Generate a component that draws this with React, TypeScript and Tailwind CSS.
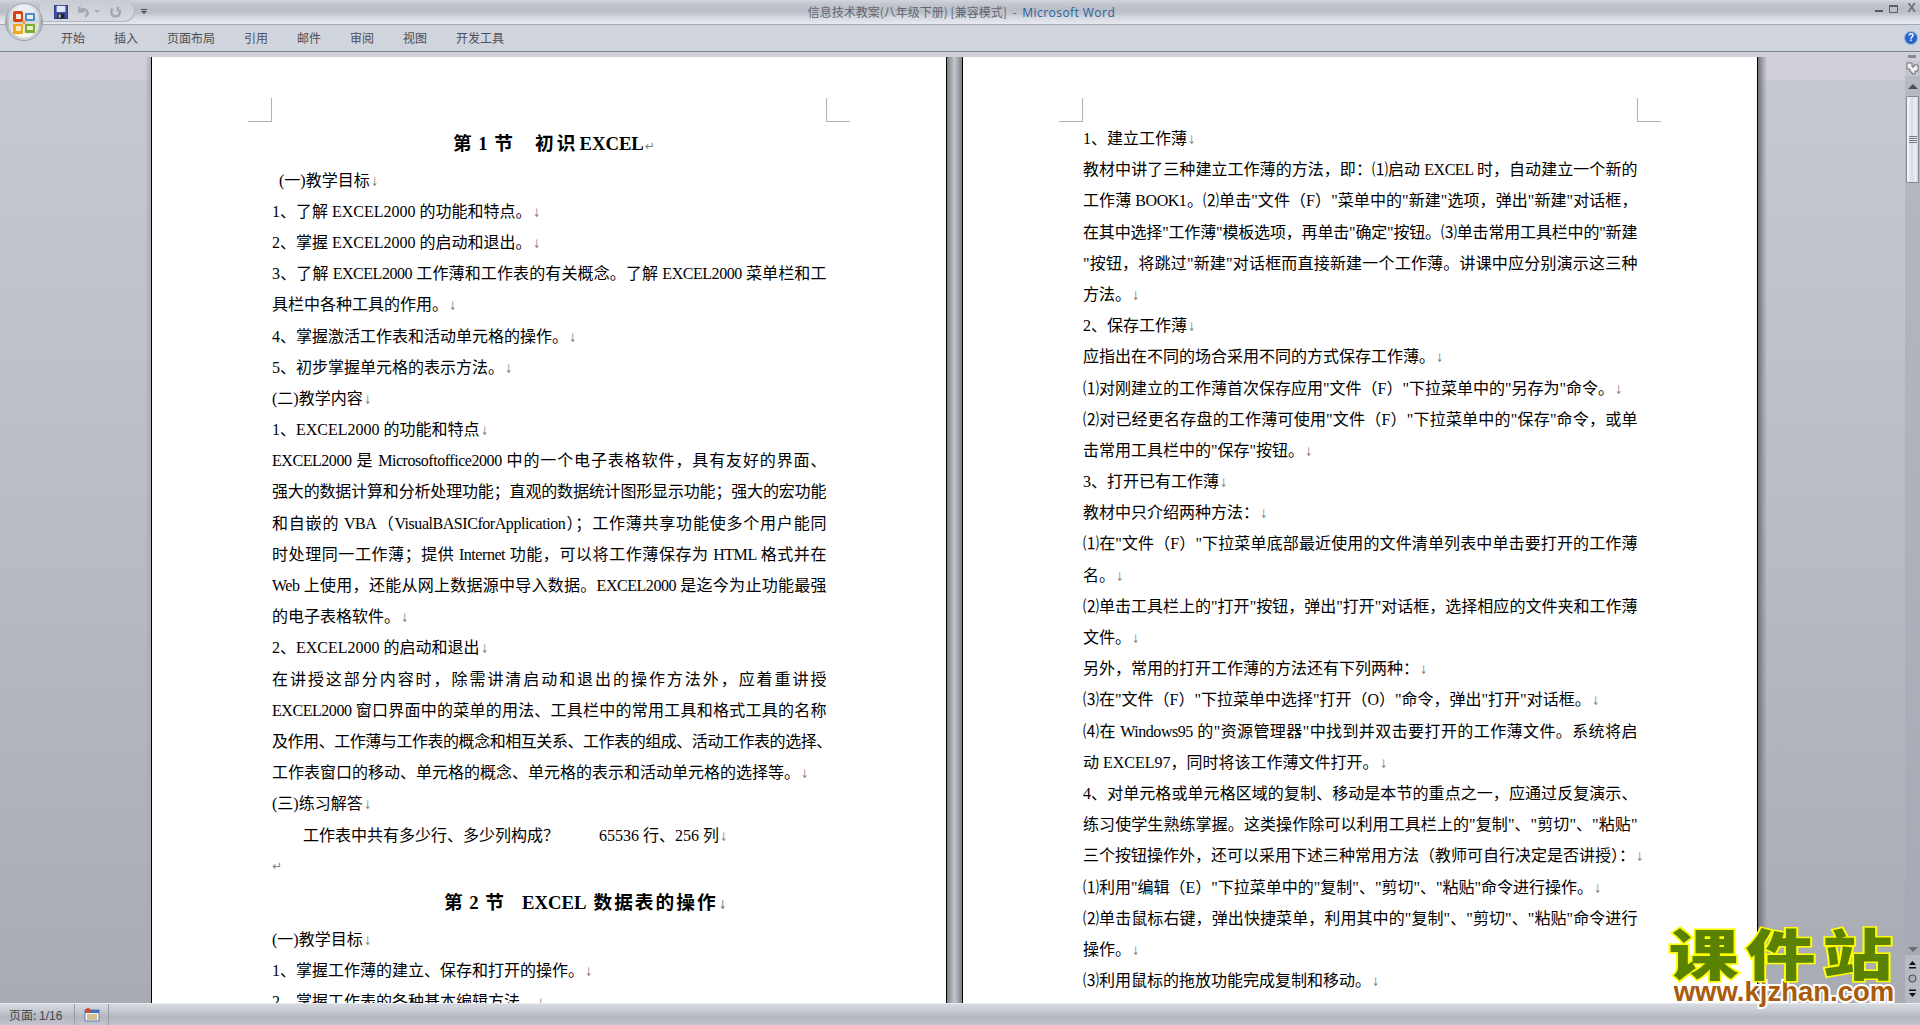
import React from "react";

const fw = (s: string) =>
  s
    .replace(/\(([FEO]|Visual[^)]*|教师[^)]*)\)/g, "\uFF08$1\uFF09")
    .replace(/,/g, "\uFF0C")
    .replace(/:/g, "\uFF1A")
    .replace(/;/g, "\uFF1B")
    .replace(/\?/g, "\uFF1F");

const Br = () => <span className="text-[#808080] text-[12px] font-['DejaVu_Sans'] ml-[1px] inline-block w-[8px] scale-x-[0.7] origin-left">↓</span>;

function L({ t, full, br = true, cls = "" }: { t: string; full?: boolean; br?: boolean; cls?: string }) {
  return (
    <div className={"h-[31.2px] leading-[31.2px] whitespace-nowrap " + (full ? "tracking-[-0.45px] [text-align:justify] [text-align-last:justify] " : "") + cls}>
      {fw(t)}
      {br && !full ? <Br /> : null}
    </div>
  );
}

const left1: [string, boolean?, string?][] = [
  ["(一)教学目标", false, "pl-[7px]"],
  ["1、了解 EXCEL2000 的功能和特点。"],
  ["2、掌握 EXCEL2000 的启动和退出。"],
  ["3、了解 EXCEL2000 工作薄和工作表的有关概念。了解 EXCEL2000 菜单栏和工", true],
  ["具栏中各种工具的作用。"],
  ["4、掌握激活工作表和活动单元格的操作。"],
  ["5、初步掌握单元格的表示方法。"],
  ["(二)教学内容"],
  ["1、EXCEL2000 的功能和特点"],
  ["EXCEL2000 是 Microsoftoffice2000 中的一个电子表格软件,具有友好的界面、", true],
  ["强大的数据计算和分析处理功能;直观的数据统计图形显示功能;强大的宏功能", true],
  ["和自嵌的 VBA(VisualBASICforApplication);工作薄共享功能使多个用户能同", true],
  ["时处理同一工作薄;提供 Internet 功能,可以将工作薄保存为 HTML 格式并在", true],
  ["Web 上使用,还能从网上数据源中导入数据。EXCEL2000 是迄今为止功能最强", true],
  ["的电子表格软件。"],
  ["2、EXCEL2000 的启动和退出"],
  ["在讲授这部分内容时,除需讲清启动和退出的操作方法外,应着重讲授", true],
  ["EXCEL2000 窗口界面中的菜单的用法、工具栏中的常用工具和格式工具的名称", true],
  ["及作用、工作薄与工作表的概念和相互关系、工作表的组成、活动工作表的选择、", true],
  ["工作表窗口的移动、单元格的概念、单元格的表示和活动单元格的选择等。"],
  ["(三)练习解答"],
  ["工作表中共有多少行、多少列构成?\u00a0\u00a0\u00a0\u00a0\u00a0\u00a0\u00a0\u00a0\u00a0\u00a065536 行、256 列", false, "pl-[31px]"],
];

const left2: string[] = [
  "(一)教学目标",
  "1、掌握工作薄的建立、保存和打开的操作。",
  "2、掌握工作表的各种基本编辑方法。",
];

const right: [string, boolean?, string?][] = [
  ["1、建立工作薄"],
  ["教材中讲了三种建立工作薄的方法,即:⑴启动 EXCEL 时,自动建立一个新的", true],
  ["工作薄 BOOK1。⑵单击\"文件(F)\"菜单中的\"新建\"选项,弹出\"新建\"对话框,", true],
  ["在其中选择\"工作薄\"模板选项,再单击\"确定\"按钮。⑶单击常用工具栏中的\"新建", true],
  ["\"按钮,将跳过\"新建\"对话框而直接新建一个工作薄。讲课中应分别演示这三种", true],
  ["方法。"],
  ["2、保存工作薄"],
  ["应指出在不同的场合采用不同的方式保存工作薄。"],
  ["⑴对刚建立的工作薄首次保存应用\"文件(F)\"下拉菜单中的\"另存为\"命令。"],
  ["⑵对已经更名存盘的工作薄可使用\"文件(F)\"下拉菜单中的\"保存\"命令,或单", true],
  ["击常用工具栏中的\"保存\"按钮。"],
  ["3、打开已有工作薄"],
  ["教材中只介绍两种方法:"],
  ["⑴在\"文件(F)\"下拉菜单底部最近使用的文件清单列表中单击要打开的工作薄", true],
  ["名。"],
  ["⑵单击工具栏上的\"打开\"按钮,弹出\"打开\"对话框,选择相应的文件夹和工作薄", true],
  ["文件。"],
  ["另外,常用的打开工作薄的方法还有下列两种:"],
  ["⑶在\"文件(F)\"下拉菜单中选择\"打开(O)\"命令,弹出\"打开\"对话框。"],
  ["⑷在 Windows95 的\"资源管理器\"中找到并双击要打开的工作薄文件。系统将启", true],
  ["动 EXCEL97,同时将该工作薄文件打开。"],
  ["4、对单元格或单元格区域的复制、移动是本节的重点之一,应通过反复演示、", true],
  ["练习使学生熟练掌握。这类操作除可以利用工具栏上的\"复制\"、\"剪切\"、\"粘贴\"", true],
  ["三个按钮操作外,还可以采用下述三种常用方法(教师可自行决定是否讲授):"],
  ["⑴利用\"编辑(E)\"下拉菜单中的\"复制\"、\"剪切\"、\"粘贴\"命令进行操作。"],
  ["⑵单击鼠标右键,弹出快捷菜单,利用其中的\"复制\"、\"剪切\"、\"粘贴\"命令进行", true],
  ["操作。"],
  ["⑶利用鼠标的拖放功能完成复制和移动。"],
];

const tabs = ["开始", "插入", "页面布局", "引用", "邮件", "审阅", "视图", "开发工具"];

function OfficeButton() {
  return (
    <svg width="38" height="38" viewBox="0 0 38 38" className="absolute left-[5px] top-[3px]">
      <defs>
        <linearGradient id="rim" x1="0" y1="0" x2="0" y2="1">
          <stop offset="0" stopColor="#f4f5f7" />
          <stop offset="0.5" stopColor="#a9adb5" />
          <stop offset="1" stopColor="#d9dbe0" />
        </linearGradient>
        <linearGradient id="glass" x1="0" y1="0" x2="0" y2="1">
          <stop offset="0" stopColor="#f0f2f5" />
          <stop offset="0.5" stopColor="#d3d6dc" />
          <stop offset="1" stopColor="#fbfaf0" />
        </linearGradient>
      </defs>
      <circle cx="19" cy="19" r="18.5" fill="url(#rim)" stroke="#8d9098" strokeWidth="0.8" />
      <circle cx="19" cy="19" r="15.5" fill="url(#glass)" />
      <rect x="8" y="8" width="10" height="11" rx="2" fill="#d8420e" />
      <rect x="11" y="11" width="5" height="5" fill="#f8ece0" />
      <rect x="20" y="10" width="10" height="8" rx="1" fill="#4d8ac6" />
      <rect x="22" y="12" width="6" height="4" fill="#e8f0f7" />
      <rect x="8" y="21" width="10" height="10" rx="1" fill="#f3a71a" />
      <rect x="11" y="23" width="5" height="5" fill="#fbe9bf" />
      <rect x="20" y="21" width="10" height="9" rx="1" fill="#7eaa2d" />
      <rect x="22" y="23" width="6" height="4" fill="#e6efd2" />
      <circle cx="19" cy="19.5" r="1.4" fill="#e8912c" />
    </svg>
  );
}

function Save() {
  return (
    <svg width="14" height="14" viewBox="0 0 16 16">
      <rect x="0.5" y="0.5" width="15" height="15" fill="#3c4fa8" stroke="#2a3580" />
      <rect x="3" y="1" width="10" height="7" fill="#dfe4f6" />
      <rect x="4" y="10" width="8" height="5.500" fill="#20242e" />
      <rect x="5.500" y="11" width="2" height="3.500" fill="#d5d8e0" />
    </svg>
  );
}

function Scrollbar() {
  return (
    <div className="w-[15px] flex flex-col bg-[linear-gradient(180deg,#b6b9c2,#a6a9b3)]">
      <div className="h-[9px] bg-[#d0ced8] flex justify-center items-start pt-[3px] -ml-[1px]">
        <div className="w-[8px] h-[3px] bg-[#85888f]" />
      </div>
      <div className="h-[15px] bg-[#c4c7cf] flex items-center justify-center">
        <svg width="13" height="13" viewBox="0 0 13 13">
          <path d="M1 1h5v4h2V3h4v6H9v3H6v-2H4V7H1z" fill="#f2eef2" stroke="#55585f" strokeWidth="0.8" />
        </svg>
      </div>
      <div className="h-[20px] flex items-center justify-center">
        <div className="w-0 h-0 border-x-[5px] border-x-transparent border-b-[5px] border-b-[#4c5059]" />
      </div>
      <div className="h-[87px] mx-[1px] border border-[#888b93] rounded-[1px] bg-[linear-gradient(90deg,#f7f8fa,#d8dbe2_45%,#eef0f4_80%,#c9ccd4)] flex flex-col items-center justify-center gap-[1px]">
        <div className="w-[8px] h-px bg-[#777a82]" />
        <div className="w-[8px] h-px bg-[#777a82]" />
        <div className="w-[8px] h-px bg-[#777a82]" />
        <div className="w-[8px] h-px bg-[#777a82]" />
      </div>
      <div className="flex-1 flex items-end justify-center pb-[3px]">
        <div className="w-0 h-0 border-x-[5px] border-x-transparent border-t-[5px] border-t-[#6c7079]" />
      </div>
      <div className="h-[48px] bg-[#b8bbc4] flex flex-col items-center justify-around py-[2px]">
        <svg width="9" height="9" viewBox="0 0 9 9"><path d="M4.500 1L8 5H1zM1 7h7v1.400H1z" fill="#111" /></svg>
        <svg width="9" height="9" viewBox="0 0 9 9"><circle cx="4.500" cy="4.500" r="3.600" fill="#a9acb3" stroke="#444" /></svg>
        <svg width="9" height="9" viewBox="0 0 9 9"><path d="M1 .6h7V2H1zM1 4h7L4.500 8z" fill="#111" /></svg>
      </div>
    </div>
  );
}

export default function App() {
  return (
    <div className="relative w-[1920px] h-[1025px] overflow-hidden flex flex-col font-['Noto_Sans_CJK_SC','Liberation_Sans',sans-serif]">
      {/* Title bar */}
      <div className="h-[25px] border-b border-[#a5a8b0] grid grid-cols-[1fr_auto_1fr] bg-[linear-gradient(180deg,#d2d5dc_0,#c3c6ce_4px,#babdc6_10px,#c2c5cd_14px,#d5d8df_17px,#e6e9ef_24px)]">
        <div className="flex items-start">
          <div className="ml-[40px] w-[95px] h-[22px] rounded-br-[14px] rounded-tr-[14px] border-r border-b border-[#b3b6be] bg-[linear-gradient(180deg,#c8cbd3,#d6d9e0)] flex items-center pl-[14px] pt-[2px]">
            <Save />
            <svg width="13" height="13" viewBox="0 0 16 16" fill="none" stroke="#a4a7ae" strokeWidth="3" className="ml-[9px]"><path d="M3 2v6h6M4 7c3-3 8-2 9 2 .5 2-1 4-3 5" /></svg>
            <div className="ml-[4px] w-0 h-0 border-x-[3px] border-x-transparent border-t-[3px] border-t-[#a8abb2]" />
            <svg width="13" height="13" viewBox="0 0 16 16" fill="none" stroke="#a4a7ae" strokeWidth="3" className="ml-[9px]"><path d="M11 2v6M4 4C1.500 8 3 14 8 14s6.500-4 5-8" /></svg>
          </div>
          <div className="ml-[6px] mt-[9px] flex flex-col items-center gap-[1px]">
            <div className="w-[6px] h-px bg-[#4a4d55]" />
            <div className="w-0 h-0 border-x-[3px] border-x-transparent border-t-[3px] border-t-[#4a4d55]" />
          </div>
        </div>
        <div className="text-[12px] leading-[24px] whitespace-nowrap text-[#62666f] pl-[3px]">
          信息技术教案(八年级下册) [兼容模式] <span className="mx-[3px]">-</span>{" "}
          <span className="text-[#2b5f9e] font-['Open_Sans'] tracking-[0.45px]">Microsoft Word</span>
        </div>
        <div className="flex items-start justify-end pr-[2px]">
          <div className="mt-[10px] w-[8px] h-[2px] bg-[#55585f] mr-[6px]" />
          <div className="mt-[5px] w-[9px] h-[8px] border border-t-2 border-[#5c6068] mr-[9px]" />
          <div className="mt-[1px] mr-[2px] text-[13px] leading-[14px] font-bold text-[#6e7178] font-['Liberation_Sans']">X</div>
        </div>
      </div>

      {/* Ribbon tabs */}
      <div className="h-[27px] bg-[#d0d4dc] border-b border-[#7e8288] flex items-center pl-[61px] gap-[29px] text-[12px] text-[#4c4f57] relative">
        {tabs.map((t) => (
          <span key={t}>{t}</span>
        ))}
        <div className="absolute right-[2px] top-[6px] w-[14px] h-[14px] rounded-full bg-[#2a63c9] border border-[#9db7e6] text-white text-[10px] leading-[12px] text-center font-bold font-['Liberation_Sans']">?</div>
      </div>

      {/* Work area */}
      <div className="flex-1 min-h-0 flex">
        <div className="w-[1905px] flex overflow-hidden pt-[5px] pl-[145px] bg-[linear-gradient(180deg,#d1cfd9_0,#d1cfd9_28px,#c6c9d1_28px,#b8bbc4_500px,#a8abb4_100%)] text-[16px] text-black font-['Liberation_Serif','Noto_Sans_CJK_SC',serif]">
          <div className="w-[6px] bg-[linear-gradient(90deg,transparent,#a9acb4)]" />
          <div className="w-[796px] box-border border-x border-black bg-white overflow-hidden pt-[41px]">
            <div className="flex justify-between px-[96px] h-[24px]">
              <div className="w-[24px] border-r border-b border-[#b0b1b8]" />
              <div className="w-[24px] border-l border-b border-[#b0b1b8]" />
            </div>
            <div className="pt-[1px] px-[120px]">
              <div className="h-[41.6px] leading-[41.6px] pl-[181px] font-bold text-[18.7px] whitespace-nowrap">
                <span className="tracking-[1px]">第 1 节</span>
                <span className="ml-[21px] tracking-[3px]">初识</span>
                <span className="ml-[1px]">EXCEL</span>
                <span className="text-[#808080] text-[12px] font-normal font-['DejaVu_Sans'] ml-[1px]">↵</span>
              </div>
              {left1.map(([t, f, c], i) => (
                <L key={i} t={t} full={f} cls={c} />
              ))}
              <div className="h-[31.2px] leading-[31.2px] text-[#808080] text-[12px] font-['DejaVu_Sans']">↵</div>
              <div className="h-[42px] leading-[42px] pl-[172px] font-bold text-[18.7px] whitespace-nowrap">
                <span className="tracking-[1px]">第 2 节</span>
                <span className="ml-[17px]">EXCEL</span>
                <span className="ml-[7px] tracking-[2px]">数据表的操作</span>
                <Br />
              </div>
              {left2.map((t, i) => (
                <L key={i} t={t} />
              ))}
            </div>
          </div>
          <div className="w-[15px] bg-[linear-gradient(90deg,#7d8087,#c4c7ce_50%,#7d8087)]" />
          <div className="w-[796px] box-border border-x border-black bg-white overflow-hidden pt-[41px]">
            <div className="flex justify-between px-[96px] h-[24px]">
              <div className="w-[24px] border-r border-b border-[#b0b1b8]" />
              <div className="w-[24px] border-l border-b border-[#b0b1b8]" />
            </div>
            <div className="pt-[1px] px-[120px]">
              {right.map(([t, f, c], i) => (
                <L key={i} t={t} full={f} cls={c} />
              ))}
            </div>
          </div>
          <div className="w-[9px] bg-[linear-gradient(90deg,#70737b,transparent)]" />
        </div>
        <Scrollbar />
      </div>

      {/* Status bar */}
      <div className="h-[22px] flex items-center border-t border-[#e8eaee] bg-[linear-gradient(180deg,#d7dae0,#c3c6ce_40%,#b3b6be_60%,#c2c5cd)] text-[12px] text-[#43464e]">
        <div className="w-[75px] pl-[9px] border-r border-[#9a9da5] h-full leading-[21px]">页面: <span className="font-['Liberation_Sans']">1/16</span></div>
        <div className="w-[34px] h-full border-r border-[#9a9da5] flex items-center justify-center">
          <svg width="16" height="14" viewBox="0 0 16 14">
            <rect x="1" y="2" width="14" height="11" fill="#f6f6f6" stroke="#5a7fb5" />
            <rect x="1" y="2" width="14" height="3" fill="#3f6fb5" />
            <path d="M3 7h10M3 9h10M3 11h10" stroke="#b5892f" strokeWidth="1" />
            <circle cx="4" cy="2.500" r="2.500" fill="#e0452c" />
          </svg>
        </div>
      </div>

      <OfficeButton />

      {/* Watermark */}
      <div className="absolute left-[1668px] top-[923px] w-[232px] text-center pointer-events-none whitespace-nowrap">
        <div className="h-[58px] leading-[58px] text-[70px] font-black tracking-[7px] text-[#5a8200] [-webkit-text-stroke:4px_#ffff00] [paint-order:stroke_fill] scale-y-[0.78]">课件站</div>
        <div className="h-[22px] leading-[22px] text-[27.5px] font-bold font-['Liberation_Sans'] text-[#aa5a0c] [-webkit-text-stroke:4px_#ffffff] [paint-order:stroke_fill]">www.kjzhan.com</div>
      </div>
    </div>
  );
}
